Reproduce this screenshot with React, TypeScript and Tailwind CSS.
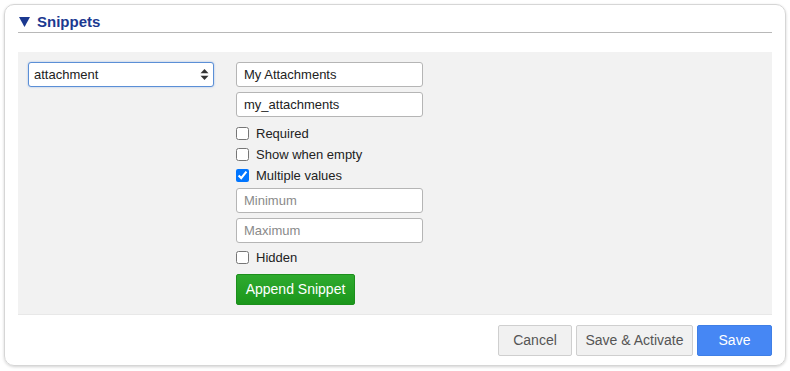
import { useState } from 'react'

const font = { fontFamily: '"Liberation Sans", Arial, sans-serif' }

function Check({ label, checked }: { label: string; checked?: boolean }) {
  const [on, setOn] = useState(!!checked)
  return (
    <label className="flex items-center h-[21px] text-[13px] text-[#222]">
      <input type="checkbox" checked={on} onChange={e => setOn(e.target.checked)} className="w-[13px] h-[13px] m-0 accent-[#0075ff]" />
      <span className="ml-[7px]">{label}</span>
    </label>
  )
}

function Field({ value, placeholder }: { value?: string; placeholder?: string }) {
  return (
    <input
      type="text"
      defaultValue={value}
      placeholder={placeholder}
      className="w-[187px] h-[25px] border border-[#b5b5b5] rounded-[3px] bg-white px-[7px] text-[13px] text-[#222] placeholder:text-[#8a8a8a] focus:outline-none"
    />
  )
}

export default function App() {
  return (
    <div className="w-[790px] h-[371px] bg-white p-[4px]" style={font}>
      <div className="h-[362px] w-[782px] rounded-[10px] border border-[#d6d6d6] shadow-[0_1px_3px_rgba(0,0,0,0.18)] px-[13px] pt-[7px]">
        <div className="h-[21px] border-b border-[#b8b8b8] flex items-center text-[15px] font-bold text-[#1b3990] pl-[1px]">
          <svg className="mr-[7px]" width="11" height="10" viewBox="0 0 11 10">
            <path d="M0 0H11L5.5 10Z" fill="#1b3990" />
          </svg>
          <span>Snippets</span>
        </div>

        <div className="mt-[19px] bg-[#f2f2f2] border-b border-[#e8e8e8] h-[263px] pl-[10px] pt-[10px] flex gap-[22px]">
          <div className="relative w-[186px] h-[25px]">
            <select
              defaultValue="attachment"
              className="appearance-none w-full h-full border border-[#5b8fd6] rounded-[3px] bg-white pl-[5px] text-[13px] text-[#222] shadow-[0_0_2px_rgba(70,130,220,0.5)] focus:outline-none"
            >
              <option value="attachment">attachment</option>
              <option value="text">text</option>
            </select>
            <svg className="absolute right-[5px] top-[7px] pointer-events-none" width="9" height="11" viewBox="0 0 9 11">
              <path d="M4.5 0L8.5 4.2H0.5Z" fill="#333" />
              <path d="M4.5 11L8.5 6.8H0.5Z" fill="#333" />
            </svg>
          </div>

          <div className="flex flex-col">
            <Field value="My Attachments" />
            <div className="mt-[5px]"><Field value="my_attachments" /></div>
            <div className="mt-[6px]">
              <Check label="Required" />
              <Check label="Show when empty" />
              <Check label="Multiple values" checked />
            </div>
            <div className="mt-[2px]"><Field placeholder="Minimum" /></div>
            <div className="mt-[5px]"><Field placeholder="Maximum" /></div>
            <div className="mt-[4px]"><Check label="Hidden" /></div>
            <button className="mt-[6px] w-[119px] h-[31px] rounded-[2px] border border-[#1c8f1c] bg-gradient-to-b from-[#2eaa2e] to-[#1b971b] text-white text-[14px]">
              Append Snippet
            </button>
          </div>
        </div>

        <div className="flex justify-end gap-[4px] mt-[10px]">
          <button className="w-[74px] h-[31px] border border-[#cfcfcf] rounded-[2px] bg-[#f1f1f1] text-[14px] text-[#555]">Cancel</button>
          <button className="w-[117px] h-[31px] border border-[#cfcfcf] rounded-[2px] bg-[#f1f1f1] text-[14px] text-[#555]">Save &amp; Activate</button>
          <button className="w-[75px] h-[31px] border border-[#3f7fe6] rounded-[2px] bg-[#4687f4] text-[14px] text-white">Save</button>
        </div>
      </div>
    </div>
  )
}
